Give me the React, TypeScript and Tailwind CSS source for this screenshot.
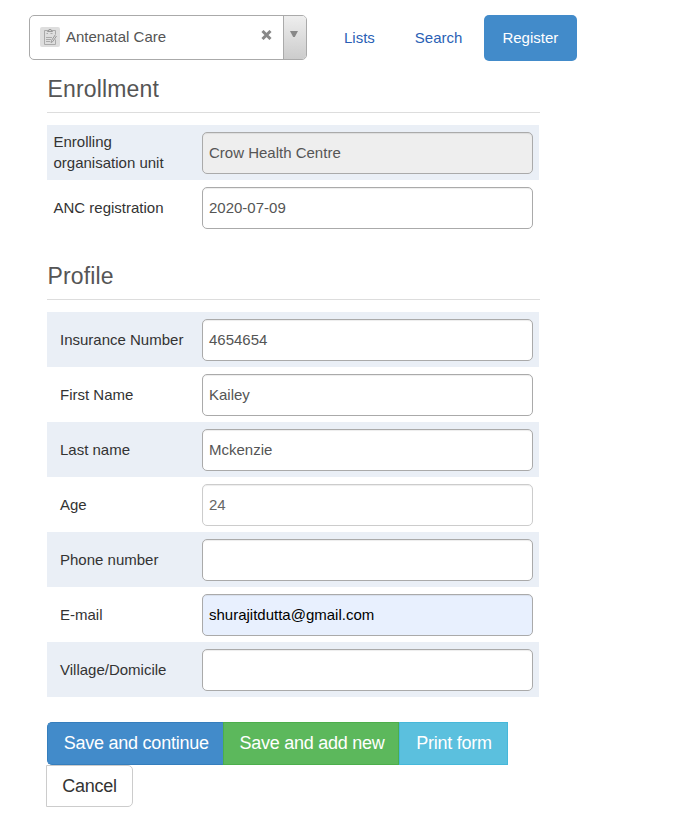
type Field = { label: string; value?: string; look?: string };

const enrollment: Field[] = [
  { label: 'Enrolling organisation unit', value: 'Crow Health Centre', look: 'border-[#aaa] bg-[#eee] text-[#555]' },
  { label: 'ANC registration', value: '2020-07-09' },
];

const profile: Field[] = [
  { label: 'Insurance Number', value: '4654654' },
  { label: 'First Name', value: 'Kailey' },
  { label: 'Last name', value: 'Mckenzie' },
  { label: 'Age', value: '24', look: 'border-[#ccc] bg-white text-[#666]' },
  { label: 'Phone number' },
  { label: 'E-mail', value: 'shurajitdutta@gmail.com', look: 'border-[#aaa] bg-[#e8f0fe] text-black' },
  { label: 'Village/Domicile' },
];

function Section({ title, fields, labelPad }: { title: string; fields: Field[]; labelPad: string }) {
  return (
    <section className="w-[493px]">
      <h2 className="h-[39px] border-b border-[#ddd] pl-[0.5px] text-[23px] leading-[31px] tracking-[0.15px] text-[#555]">{title}</h2>
      <div className="mt-3 w-[492px]">
        {fields.map((f) => (
          <div key={f.label} className="flex h-[55px] items-center odd:bg-[#eaeff6]">
            <div className={`w-[155px] leading-[21px] text-[#333] ${labelPad}`}>{f.label}</div>
            <div
              className={`flex h-[42px] w-[331px] items-center rounded-[5px] border px-1.5 pt-px shadow-[inset_0_1px_1px_rgba(0,0,0,0.075)] ${f.look ?? 'border-[#aaa] bg-white text-[#555]'}`}
            >
              {f.value}
            </div>
          </div>
        ))}
      </div>
    </section>
  );
}

function ProgramIcon() {
  return (
    <svg width="20" height="20" viewBox="0 0 20 20" fill="none" stroke="#aaa" strokeWidth="1">
      <rect width="20" height="20" rx="2" fill="#dedede" stroke="none" />
      <path d="M7 3.500H4.500v14h11v-5M13 3.500h2.500V7" />
      <path d="M7.500 4.500v-1H9v-1h2v1h1.500v1z" stroke="#999" />
      <path d="M6.500 6.500h1.500M10.500 6.500h2M6 10.500h6M6 12.500h5M6 14.500h4" />
      <path d="M15.500 7.500l-4 6-.5 2 1.800-1 3.700-5.500" stroke="#999" />
    </svg>
  );
}

export default function App() {
  return (
    <div className="h-[823px] w-[676px] bg-white pt-[15px] font-['Liberation_Sans',Arial,sans-serif] text-[15px]">
      <nav className="ml-[29px] flex">
        <div className="flex h-[45px] w-[278px] overflow-hidden rounded-[5px] border border-[#aaa]">
          <div className="flex flex-1 items-center pl-[10px] pr-[11px] pb-[2px] text-[#555]">
            <ProgramIcon />
            <span className="ml-[6px] flex-1 pt-[2px]">Antenatal Care</span>
            <svg className="mb-[3px]" width="11" height="10" viewBox="0 0 11 10" stroke="#888" strokeWidth="3">
              <path d="M1.500 1l8 8M9.500 1l-8 8" />
            </svg>
          </div>
          <div className="flex w-[24px] border-l border-[#aaa] bg-linear-to-b from-[#eee] to-[#ccc] pl-[6px] pt-[15px] -mr-px">
            <svg width="8" height="7" viewBox="0 0 8 7" fill="#888">
              <path d="M0 0h8L4.800 6h-1.600z" />
            </svg>
          </div>
        </div>
        <a className="ml-[37px] mt-3 leading-[21px] text-[#2a5fb5]">Lists</a>
        <a className="ml-[40px] mt-3 leading-[21px] text-[#2a5fb5]">Search</a>
        <a className="ml-[22px] flex h-[46px] w-[93px] items-center justify-center rounded-[5px] bg-[#428bca] pr-px text-white">Register</a>
      </nav>
      <main className="ml-[47px]">
        <div className="mt-[13px]">
          <Section title="Enrollment" fields={enrollment} labelPad="pl-[6.5px] pr-5 pb-px" />
        </div>
        <div className="mt-[26px]">
          <Section title="Profile" fields={profile} labelPad="pl-[13px] pr-2" />
        </div>
        <div className="mt-[25px] flex text-[18px] tracking-[-0.25px] text-white">
          <button className="h-[43px] w-[176px] rounded-l-[5px] border border-r-0 border-[#357ebd] bg-[#428bca] pl-[1.5px]">Save and continue</button>
          <button className="h-[43px] w-[176px] border border-[#4cae4c] bg-[#5cb85c] pl-[2px]">Save and add new</button>
          <button className="h-[43px] w-[109px] border border-[#46b8da] bg-[#5bc0de] pl-px">Print form</button>
        </div>
        <button className="-ml-px block h-[42px] w-[87px] rounded-r-[5px] border border-[#ccc] bg-white text-[18px] tracking-[-0.25px] text-[#333]">Cancel</button>
      </main>
    </div>
  );
}
